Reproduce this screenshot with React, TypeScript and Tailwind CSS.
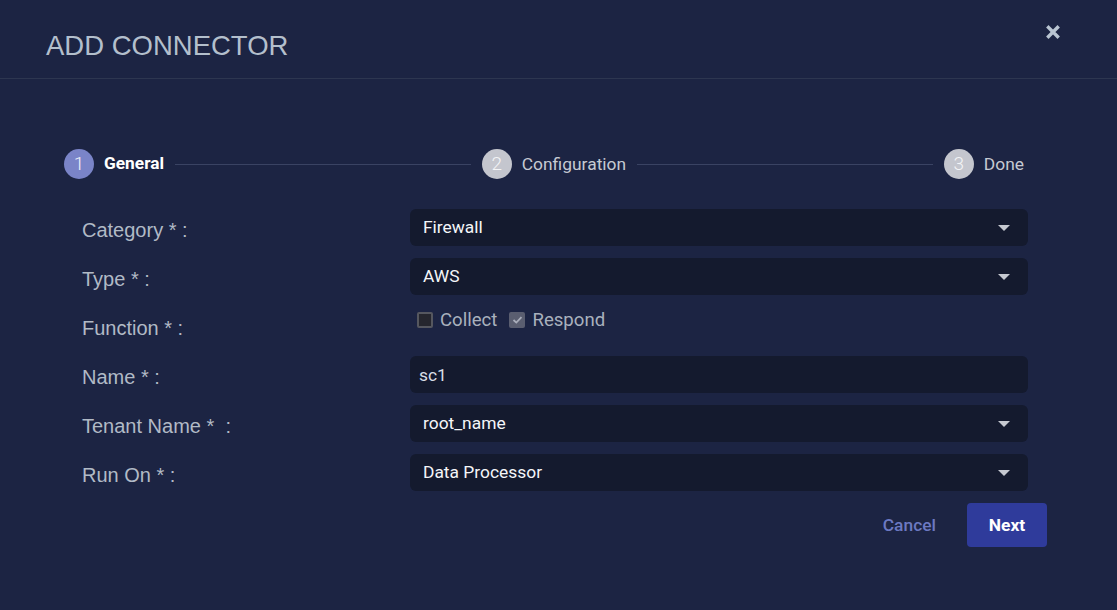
import React, { useState } from "react";

const steps = [
  { n: 1, label: "General", active: true },
  { n: 2, label: "Configuration", active: false },
  { n: 3, label: "Done", active: false },
];

const Arrow = () => (
  <svg width="12" height="6" viewBox="0 0 12 6" className="shrink-0">
    <path d="M0 0 L12 0 L6 6 Z" fill="#c6c9d1" />
  </svg>
);

const Select = ({ value }: { value: string }) => (
  <div className="flex h-[37px] w-[618px] items-center justify-between rounded-[6px] bg-[#141a2e] pl-[13px] pr-[18px] text-[17.4px] text-[#f4f6f9]">
    <span>{value}</span>
    <Arrow />
  </div>
);

const Label = ({ text }: { text: string }) => (
  <div className="h-[37px] w-[328px] shrink-0 pt-[5px] font-['Liberation_Sans',Arial,sans-serif] text-[20px] leading-[32px] whitespace-pre text-[#b1bac6]">
    {text}
  </div>
);

const App = (): JSX.Element => {
  const [collect, setCollect] = useState(false);
  const [respond, setRespond] = useState(true);

  return (
    <div className="h-[610px] w-[1117px] overflow-hidden bg-[#1c2443] font-['Roboto',sans-serif]">
      {/* header */}
      <div className="flex h-[79px] justify-between border-b border-[#2d3650] pl-[46px] pr-[57px]">
        <h1 className="pt-[32px] font-['Liberation_Sans',Arial,sans-serif] text-[27.5px] leading-none text-[#b3bfcc]">
          ADD CONNECTOR
        </h1>
        <button className="mt-[25px] h-[14px] w-[14px]">
          <svg width="14" height="14" viewBox="0 0 14 14">
            <path d="M2.5 2.5 L11.5 11.5 M11.5 2.5 L2.5 11.5" stroke="#b9c5d2" strokeWidth="3.4" strokeLinecap="square" />
          </svg>
        </button>
      </div>

      {/* stepper */}
      <div className="mt-[70px] flex items-center pl-[64px] pr-[93px]">
        {steps.map((s, i) => (
          <React.Fragment key={s.n}>
            <div className="flex items-center gap-[10px]">
              <div
                className={
                  s.active
                    ? "flex h-[30px] w-[30px] items-center justify-center rounded-full bg-[#7a84c8] text-[19px] font-light text-[#eef0fa]"
                    : "flex h-[30px] w-[30px] items-center justify-center rounded-full bg-[#c4c6ce] text-[19px] font-light text-[#f4f5f7]"
                }
              >
                {s.n}
              </div>
              <span
                className={
                  s.active
                    ? "text-[17.3px] font-bold text-white"
                    : "text-[17.4px] text-[#c6cad2]"
                }
              >
                {s.label}
              </span>
            </div>
            {i < steps.length - 1 && <div className="mx-[11px] h-px flex-1 bg-[#3a4363]" />}
          </React.Fragment>
        ))}
      </div>

      {/* form */}
      <div className="mt-[30px] flex flex-col gap-[12px] pl-[82px]">
        <div className="flex">
          <Label text="Category * :" />
          <Select value="Firewall" />
        </div>
        <div className="flex">
          <Label text="Type * :" />
          <Select value="AWS" />
        </div>
        <div className="flex h-[37px]">
          <Label text="Function * :" />
          <div className="flex h-[25px] items-center pl-[7px] pt-[1px] text-[18.6px] leading-[24px] text-[#a9b1bd]">
            <button onClick={() => setCollect(!collect)} className="flex items-center gap-[7px]">
              <span className="flex h-[16px] w-[16px] items-center justify-center rounded-[2px] border-2 border-[#55575f] bg-[#25262e]">
                {collect && (
                  <svg width="10" height="10" viewBox="0 0 10 10">
                    <path d="M1.5 5 L4 7.5 L8.5 2.5" stroke="#a3a7b3" strokeWidth="1.8" fill="none" />
                  </svg>
                )}
              </span>
              Collect
            </button>
            <button onClick={() => setRespond(!respond)} className="ml-[12px] flex items-center gap-[7px]">
              <span className="flex h-[16px] w-[16px] items-center justify-center rounded-[2px] bg-[#5a5e70]">
                {respond && (
                  <svg width="11" height="10" viewBox="0 0 11 10">
                    <path d="M1.5 5 L4.3 7.6 L9.5 2.2" stroke="#a9adba" strokeWidth="1.8" fill="none" />
                  </svg>
                )}
              </span>
              Respond
            </button>
          </div>
        </div>
        <div className="flex">
          <Label text="Name * :" />
          <input
            className="h-[37px] w-[618px] rounded-[6px] bg-[#141a2e] pl-[9px] text-[17.4px] text-[#d9dee6] outline-none"
            defaultValue="sc1"
          />
        </div>
        <div className="flex">
          <Label text="Tenant Name *  :" />
          <Select value="root_name" />
        </div>
        <div className="flex">
          <Label text="Run On * :" />
          <Select value="Data Processor" />
        </div>
      </div>

      {/* actions */}
      <div className="mt-[12px] flex justify-end gap-[15px] pr-[70px]">
        <button className="h-[44px] px-[16px] text-[17.4px] font-medium text-[#6c79c2]">Cancel</button>
        <button className="h-[44px] w-[80px] rounded-[4px] bg-[#2f3b9b] text-[17.4px] font-bold text-white">
          Next
        </button>
      </div>
    </div>
  );
};

export default App;
